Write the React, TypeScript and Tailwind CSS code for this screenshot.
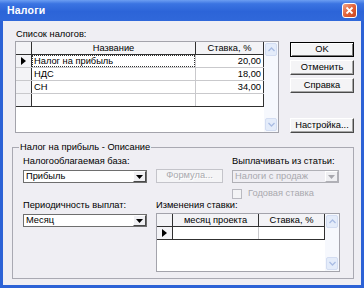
import React from "react";

function Tri() {
  return (
    <svg width="5" height="8" viewBox="0 0 5 8">
      <polygon points="0,0 5,4 0,8" fill="#000" />
    </svg>
  );
}

function Down({ color }: { color: string }) {
  return (
    <svg width="7" height="4" viewBox="0 0 7 4">
      <polygon points="0,0 7,0 3.5,4" fill={color} />
    </svg>
  );
}

function Chevron({ up }: { up?: boolean }) {
  return (
    <svg width="7" height="5" viewBox="0 0 7 5">
      <path
        d={up ? "M0.5 4 L3.5 1 L6.5 4" : "M0.5 1 L3.5 4 L6.5 1"}
        fill="none"
        stroke="#a9bce3"
        strokeWidth="1.3"
      />
    </svg>
  );
}

function Scroll() {
  return (
    <div className="w-[14px] flex flex-col bg-[#f6f8fd] p-[1px]">
      <div className="h-[13px] rounded-[2px] bg-[#e4ecfa] border border-[#d3ddf2] flex items-center justify-center">
        <Chevron up />
      </div>
      <div className="flex-1" />
      <div className="h-[13px] rounded-[2px] bg-[#e4ecfa] border border-[#d3ddf2] flex items-center justify-center">
        <Chevron />
      </div>
    </div>
  );
}

function Btn({ children, def }: { children: React.ReactNode; def?: boolean }) {
  return (
    <div
      className={
        def
          ? "h-[15px] flex items-center justify-center bg-[#f4f4f6] border border-black shadow-[inset_1px_1px_0_#ffffff,inset_-1px_-1px_0_#7a7a7a]"
          : "h-[15px] flex items-center justify-center bg-[#f4f4f6] border border-t-white border-l-white border-r-[#4a4a4a] border-b-[#4a4a4a] shadow-[inset_-1px_-1px_0_#a6a6a6]"
      }
    >
      {children}
    </div>
  );
}

function Combo({ text, disabled, wide }: { text: string; disabled?: boolean; wide?: boolean }) {
  return (
    <div
      className={
        (wide ? "w-[107px] " : "w-[124px] ") +
        (disabled
          ? "mt-[2px] h-[13px] flex border border-[#b0b0b6] bg-[#efeef3]"
          : "mt-[2px] h-[13px] flex border border-[#6e6e6e] bg-white")
      }
    >
      <div
        className={
          disabled
            ? "flex-1 pl-[2px] leading-[11px] text-[#a8a8ae] whitespace-nowrap overflow-hidden"
            : "flex-1 pl-[2px] leading-[11px] whitespace-nowrap overflow-hidden"
        }
      >
        {text}
      </div>
      <div
        className={
          disabled
            ? "w-[13px] flex items-center justify-center bg-[#f0f0f3] border border-t-white border-l-white border-r-[#b0b0b6] border-b-[#b0b0b6]"
            : "w-[13px] flex items-center justify-center bg-[#f0f0f3] border border-t-white border-l-white border-r-[#4a4a4a] border-b-[#4a4a4a]"
        }
      >
        <Down color={disabled ? "#a8a8ae" : "#000"} />
      </div>
    </div>
  );
}

export default function App() {
  const rows = [
    { name: "Налог на прибыль", rate: "20,00", cur: true },
    { name: "НДС", rate: "18,00" },
    { name: "СН", rate: "34,00" },
    { name: "", rate: "" },
  ];
  return (
    <div className="w-[364px] h-[288px] flex flex-col bg-[#2c62d6] font-['Liberation_Sans',Arial,sans-serif] text-[9.3px] text-black overflow-hidden">
      <div className="h-[21px] flex items-center pl-[7px] pr-[7px] bg-[linear-gradient(180deg,#6c9ef2_0%,#3b74e2_18%,#2c64d8_55%,#3068da_100%)]">
        <span className="text-white font-bold text-[10.5px] tracking-[0.2px]">Налоги</span>
        <div className="ml-auto w-[15px] h-[15px] rounded-[3px] border border-white bg-[linear-gradient(135deg,#f3a585,#e2623a_50%,#c9451f)] flex items-center justify-center">
          <svg width="9" height="9" viewBox="0 0 9 9">
            <path d="M1.5 1.5 L7.5 7.5 M7.5 1.5 L1.5 7.5" stroke="white" strokeWidth="1.8" />
          </svg>
        </div>
      </div>

      <div className="flex-1 mx-[3px] mb-[3px] bg-[#efeef3] flex flex-col pl-[9px] pt-[7px] pb-[6px]">
        <div className="flex">
          <div className="ml-[3px] flex flex-col">
            <div className="h-[13px] leading-[13px] pl-[1px]">Список налогов:</div>
            <div className="w-[264px] h-[92px] border border-[#a3a3ab] bg-white flex">
              <div className="w-[248px] flex flex-col">
                <div className="flex h-[13px] border-b border-[#303030] bg-[#f3f3f6]">
                  <div className="w-[16px] border-r border-[#303030]" />
                  <div className="w-[164px] border-r border-[#303030] text-center leading-[12px]">Название</div>
                  <div className="w-[68px] border-r border-[#303030] text-center leading-[12px]">Ставка, %</div>
                </div>
                {rows.map((r, i) => (
                  <div
                    key={i}
                    className={
                      i === 3
                        ? "flex h-[13px] border-b border-[#303030]"
                        : "flex h-[13px] border-b border-[#c9c9cc]"
                    }
                  >
                    <div className="w-[16px] border-r border-[#303030] bg-[#f3f3f6] flex items-center justify-center">
                      {r.cur ? <Tri /> : null}
                    </div>
                    <div className="w-[164px] border-r border-[#c9c9cc] leading-[12px] flex">
                      {r.cur ? (
                        <div className="flex-1 border border-dotted border-[#333] pl-[1px] leading-[10px]">{r.name}</div>
                      ) : (
                        <div className="pl-[2px]">{r.name}</div>
                      )}
                    </div>
                    <div className="w-[68px] border-r border-[#303030] text-right pr-[2px] leading-[12px]">{r.rate}</div>
                  </div>
                ))}
              </div>
              <Scroll />
            </div>
          </div>
          <div className="ml-[11px] w-[64px] pt-[14px] flex flex-col gap-[3px]">
            <Btn def>OK</Btn>
            <Btn>Отменить</Btn>
            <Btn>Справка</Btn>
            <div className="mt-auto">
              <Btn>Настройка...</Btn>
            </div>
          </div>
        </div>

        <fieldset className="mt-[9px] w-[342px] flex-1 min-w-0 border border-[#a9a9b2] p-0 m-0">
          <legend className="ml-[6px] px-[1px] h-[11px] leading-[11px]">Налог на прибыль - Описание</legend>
          <div className="pl-[10px] pt-[2px]">
            <div className="flex">
              <div className="w-[124px] flex flex-col">
                <div className="h-[13px] leading-[13px]">Налогооблагаемая база:</div>
                <Combo text="Прибыль" />
              </div>
              <div className="ml-[9px] pt-[14px]">
                <div className="w-[67px] h-[14px] flex items-center justify-center bg-[#f4f4f6] border border-[#c4c4ca] text-[#a9a9ae] [text-shadow:1px_1px_0_#ffffff]">
                  Формула...
                </div>
              </div>
              <div className="ml-[9px] w-[107px] flex flex-col">
                <div className="h-[13px] leading-[13px] whitespace-nowrap">Выплачивать из статьи:</div>
                <Combo text="Налоги с продаж" disabled wide />
                <div className="mt-[5px] h-[11px] flex items-center">
                  <div className="w-[10px] h-[10px] border border-[#b9b9c0] bg-[#f3f3f5]" />
                  <span className="ml-[6px] text-[#a9a9ae] leading-[11px]">Годовая ставка</span>
                </div>
              </div>
            </div>
            <div className="flex">
              <div className="w-[124px] flex flex-col">
                <div className="h-[13px] leading-[13px]">Периодичность выплат:</div>
                <Combo text="Месяц" />
              </div>
              <div className="ml-[9px] flex flex-col">
                <div className="h-[13px] leading-[13px]">Изменения ставки:</div>
                <div className="mt-[1px] w-[184px] h-[59px] border border-[#a3a3ab] bg-white flex">
                  <div className="w-[168px] flex flex-col">
                    <div className="flex h-[13px] border-b border-[#303030] bg-[#f3f3f6]">
                      <div className="w-[16px] border-r border-[#303030]" />
                      <div className="w-[86px] border-r border-[#303030] text-center leading-[12px] whitespace-nowrap">месяц проекта</div>
                      <div className="w-[66px] border-r border-[#303030] text-center leading-[12px]">Ставка, %</div>
                    </div>
                    <div className="flex h-[13px] border-b border-[#303030]">
                      <div className="w-[16px] border-r border-[#303030] bg-[#f3f3f6] flex items-center justify-center">
                        <Tri />
                      </div>
                      <div className="w-[86px] border-r border-[#c9c9cc]" />
                      <div className="w-[66px] border-r border-[#303030]" />
                    </div>
                  </div>
                  <Scroll />
                </div>
              </div>
            </div>
          </div>
        </fieldset>
      </div>
    </div>
  );
}
